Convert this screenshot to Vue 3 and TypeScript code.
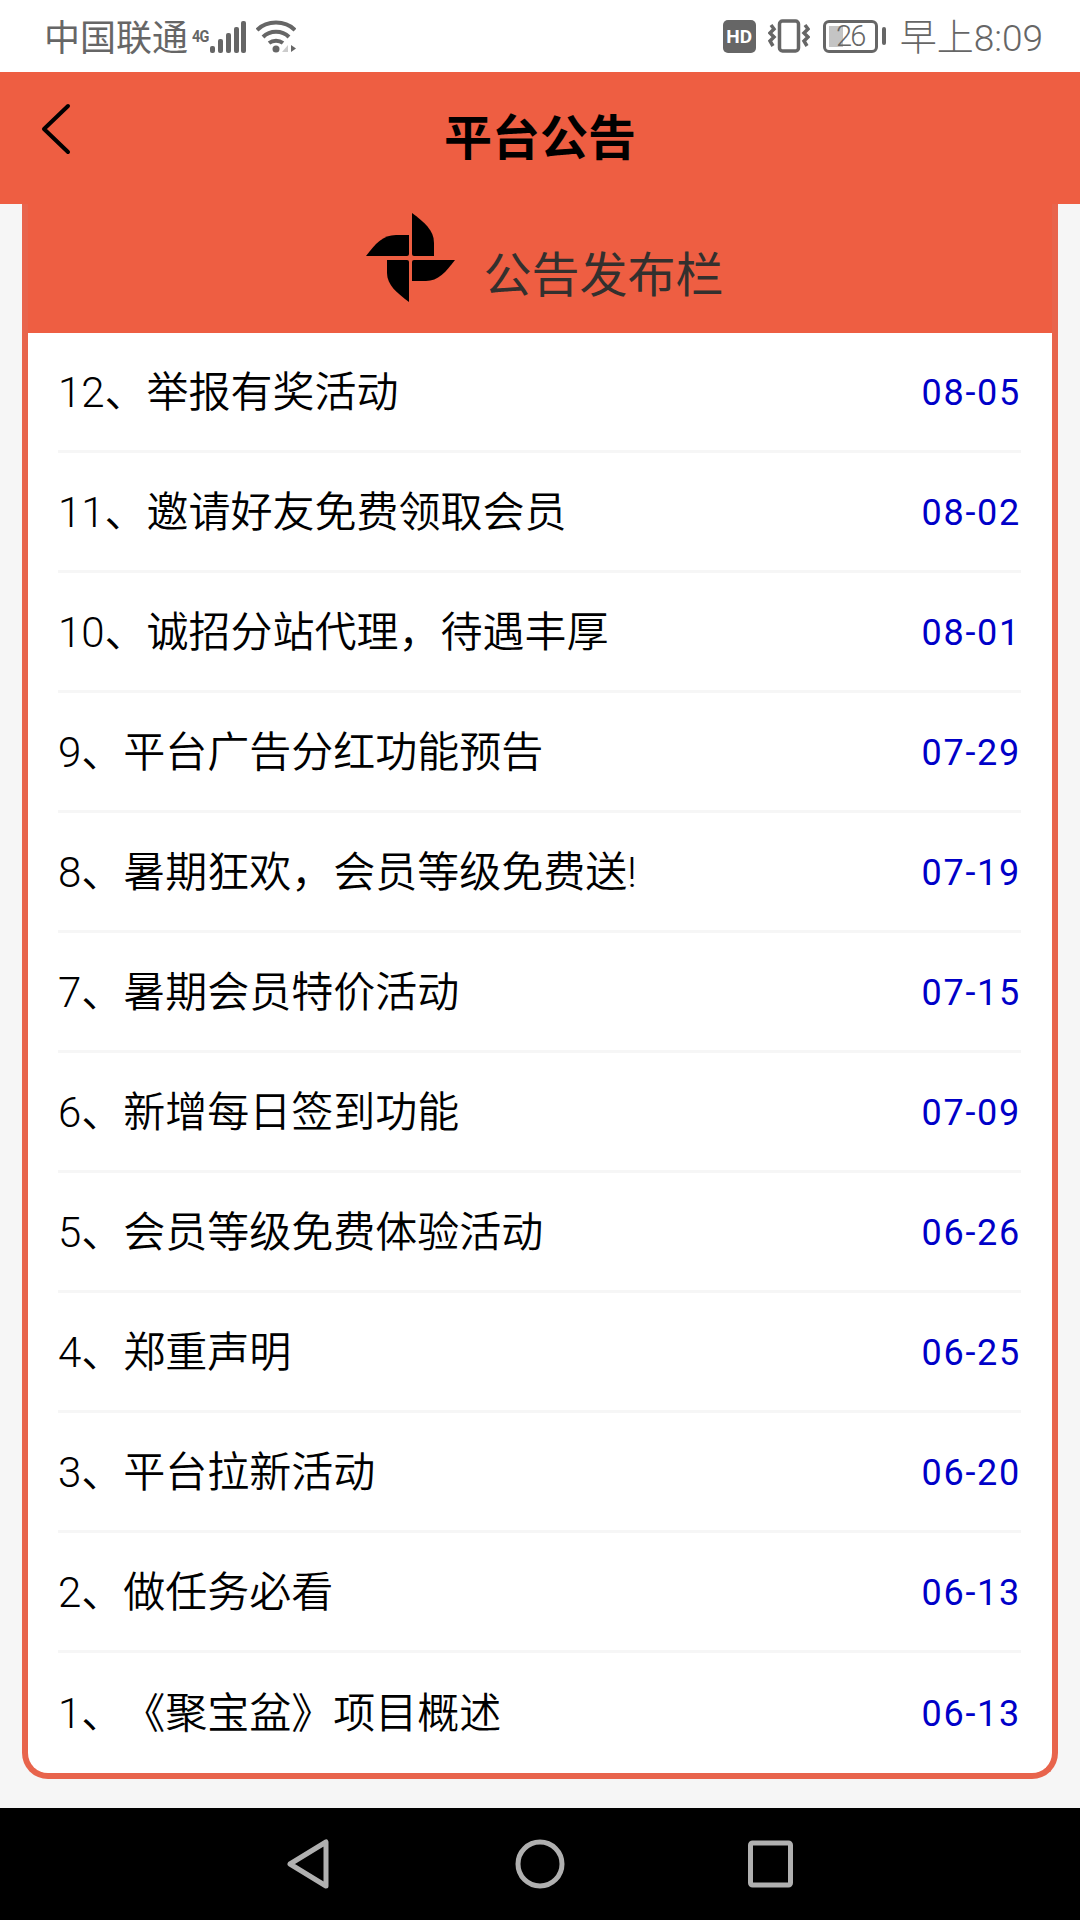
<template>
  <div class="page">
    <div class="status-bar">
      <div class="status-left">
        <span class="carrier">中国联通</span>
        <span class="net">4G</span>
        <svg class="signal" width="36" height="32" viewBox="0 0 36 32">
          <rect x="0" y="25" width="5" height="7" rx="2" fill="#666" />
          <rect x="8" y="18" width="5" height="14" rx="2" fill="#666" />
          <rect x="16" y="12" width="5" height="20" rx="2" fill="#666" />
          <rect x="24" y="6" width="5" height="26" rx="2" fill="#666" />
          <rect x="31" y="0" width="5" height="32" rx="2" fill="#666" />
        </svg>
        <svg class="wifi" width="40" height="34" viewBox="0 0 40 34" fill="none" stroke="#666" stroke-width="4">
          <path d="M1 11 C11 1 29 1 39 11" />
          <path d="M7 18 C14 11 26 11 33 18" />
          <path d="M13 24 C17 21 23 21 27 24" />
          <circle cx="20" cy="30" r="3.5" fill="#666" stroke="none" />
          <path d="M32 33 V26 L26 33 Z" fill="#ccc" stroke="none" />
          <path d="M35 26 V33 L40 29.5 Z" fill="#666" stroke="none" />
        </svg>
      </div>
      <div class="status-right">
        <span class="hd">HD</span>
        <svg class="vibrate" width="42" height="34" viewBox="0 0 42 34" fill="none" stroke="#666">
          <rect x="11.5" y="2" width="19" height="30" rx="3" stroke-width="3.5" />
          <path d="M3 6 L6 10 L2 14 L6 18 L2 22 L5 27" stroke-width="3.5" />
          <path d="M37 6 L40 10 L36 14 L40 18 L36 22 L39 27" stroke-width="3.5" />
        </svg>
        <div class="battery">
          <div class="battery-body">
            <span class="battery-fill" :style="{ width: battery * 0.55 + 'px' }"></span>
            <span class="battery-num">{{ battery }}</span>
          </div>
          <span class="battery-tip"></span>
        </div>
        <span class="clock">早上8:09</span>
      </div>
    </div>

    <header class="top-bar">
      <svg class="back" width="30" height="52" viewBox="0 0 30 52" fill="none" stroke="#000" stroke-width="4" stroke-linecap="round" stroke-linejoin="round">
        <path d="M27 3 L3 26 L27 49" />
      </svg>
      <h1 class="page-title">平台公告</h1>
    </header>

    <main class="content">
      <section class="card">
        <div class="card-head">
          <svg class="logo" width="90" height="90" viewBox="0 0 90 90" fill="#000">
            <path d="M46 0 C58 9 68 17 68 30 V43 H48 Q46 43 46 41 Z" />
            <path d="M0 43 C9 31 17 22 30 22 H43 V41 Q43 43 41 43 Z" />
            <path d="M43 89 C31 80 21 72 21 60 V47 H41 Q43 47 43 49 Z" />
            <path d="M89 47 C80 59 72 68 60 68 H46 V49 Q46 47 48 47 Z" />
          </svg>
          <span class="card-title">公告发布栏</span>
        </div>
        <ul class="notice-list">
          <li v-for="item in notices" :key="item.title" class="notice-row">
            <span class="notice-title">{{ item.title }}</span>
            <span class="notice-date">{{ item.date }}</span>
          </li>
        </ul>
      </section>
    </main>

    <nav class="nav-bar">
      <svg width="42" height="50" viewBox="0 0 42 50" fill="none" stroke="#b0b0b0" stroke-width="5" stroke-linejoin="round">
        <path d="M39 3 V47 L3 25 Z" />
      </svg>
      <svg class="nav-home" width="50" height="50" viewBox="0 0 50 50" fill="none" stroke="#b0b0b0" stroke-width="5">
        <circle cx="25" cy="25" r="22" />
      </svg>
      <svg width="45" height="48" viewBox="0 0 45 48" fill="none" stroke="#b0b0b0" stroke-width="5" stroke-linejoin="round">
        <rect x="2.5" y="3" width="40" height="42" rx="2" />
      </svg>
    </nav>
  </div>
</template>

<script setup lang="ts">
interface Notice {
  title: string
  date: string
}

const battery = 26

const notices: Notice[] = [
  { title: '12、举报有奖活动', date: '08-05' },
  { title: '11、邀请好友免费领取会员', date: '08-02' },
  { title: '10、诚招分站代理，待遇丰厚', date: '08-01' },
  { title: '9、平台广告分红功能预告', date: '07-29' },
  { title: '8、暑期狂欢，会员等级免费送!', date: '07-19' },
  { title: '7、暑期会员特价活动', date: '07-15' },
  { title: '6、新增每日签到功能', date: '07-09' },
  { title: '5、会员等级免费体验活动', date: '06-26' },
  { title: '4、郑重声明', date: '06-25' },
  { title: '3、平台拉新活动', date: '06-20' },
  { title: '2、做任务必看', date: '06-13' },
  { title: '1、《聚宝盆》项目概述', date: '06-13' },
]
</script>

<style>
html,
body {
  margin: 0;
  background: #f6f6f6;
}
</style>

<style scoped>
.page {
  width: 1080px;
  height: 1920px;
  display: flex;
  flex-direction: column;
  font-family: Roboto, "Noto Sans CJK SC", sans-serif;
  text-spacing-trim: space-all;
  background: #f6f6f6;
  overflow: hidden;
}

.status-bar {
  height: 72px;
  flex: none;
  display: flex;
  align-items: center;
  justify-content: space-between;
  padding: 0 37px 0 44px;
  background: #fff;
  color: #666;
}

.status-left,
.status-right {
  display: flex;
  align-items: center;
}

.carrier {
  font-size: 36px;
  padding-bottom: 2px;
}

.net {
  align-self: flex-start;
  width: 18px;
  margin: 19px 0 0 4px;
  font-size: 17px;
  font-weight: 700;
  line-height: 16px;
  letter-spacing: -1px;
  transform: scaleX(0.85);
  transform-origin: left;
}

.signal {
  margin-top: 2px;
}

.wifi {
  margin-left: 10px;
}

.hd {
  width: 33px;
  height: 33px;
  border-radius: 5px;
  background: #666;
  color: #fff;
  font-size: 19px;
  font-weight: 700;
  line-height: 33px;
  text-align: center;
}

.vibrate {
  margin-left: 12px;
}

.battery {
  display: flex;
  align-items: center;
  margin-left: 13px;
}

.battery-body {
  position: relative;
  box-sizing: border-box;
  width: 55px;
  height: 33px;
  border: 3px solid #666;
  border-radius: 6px;
  text-align: center;
}

.battery-fill {
  position: absolute;
  left: 3px;
  top: 3px;
  bottom: 3px;
  background: #c4c4c4;
}

.battery-num {
  position: relative;
  display: block;
  font-size: 29px;
  line-height: 27px;
  font-weight: 300;
  letter-spacing: -2px;
}

.battery-tip {
  width: 4px;
  height: 18px;
  margin-left: 4px;
  border-radius: 2px;
  background: #666;
}

.clock {
  margin-left: 14px;
  padding-bottom: 2px;
  font-size: 37px;
  font-weight: 300;
}

.top-bar {
  position: relative;
  height: 132px;
  flex: none;
  display: flex;
  align-items: center;
  justify-content: center;
  padding-bottom: 8px;
  box-sizing: border-box;
  background: #ee5e42;
}

.back {
  position: absolute;
  left: 41px;
  top: 31px;
}

.page-title {
  margin: 0;
  font-size: 48px;
  font-weight: 700;
  color: #000;
}

.content {
  flex: 1;
  padding: 0 22px;
}

.card {
  overflow: hidden;
  background: #fff;
  border: solid #e8644c;
  border-width: 0 6px 6px;
  border-radius: 0 0 26px 26px;
}

.card-head {
  height: 129px;
  display: flex;
  align-items: center;
  justify-content: center;
  gap: 27px;
  padding-left: 10px;
  margin: 0 -6px;
  background: #ee5e42;
}

.logo {
  margin-bottom: 22px;
}

.card-title {
  padding-top: 4px;
  font-size: 48px;
  color: #33302e;
}

.notice-list {
  margin: 0;
  padding: 0 31px 0 30px;
  list-style: none;
}

.notice-row {
  height: 120px;
  box-sizing: border-box;
  display: flex;
  align-items: center;
  justify-content: space-between;
  border-bottom: 3px solid #f6f6f6;
}

.notice-row:last-child {
  border-bottom: none;
}

.notice-title {
  padding-bottom: 7px;
  font-size: 42px;
  font-weight: 350;
  color: #000;
}

.notice-date {
  padding-top: 2px;
  font-size: 36px;
  letter-spacing: 1.7px;
  color: #0000c8;
}

.nav-bar {
  height: 112px;
  flex: none;
  display: flex;
  align-items: center;
  justify-content: center;
  background: #000;
}

.nav-home {
  margin: 0 183px 0 186px;
}
</style>
